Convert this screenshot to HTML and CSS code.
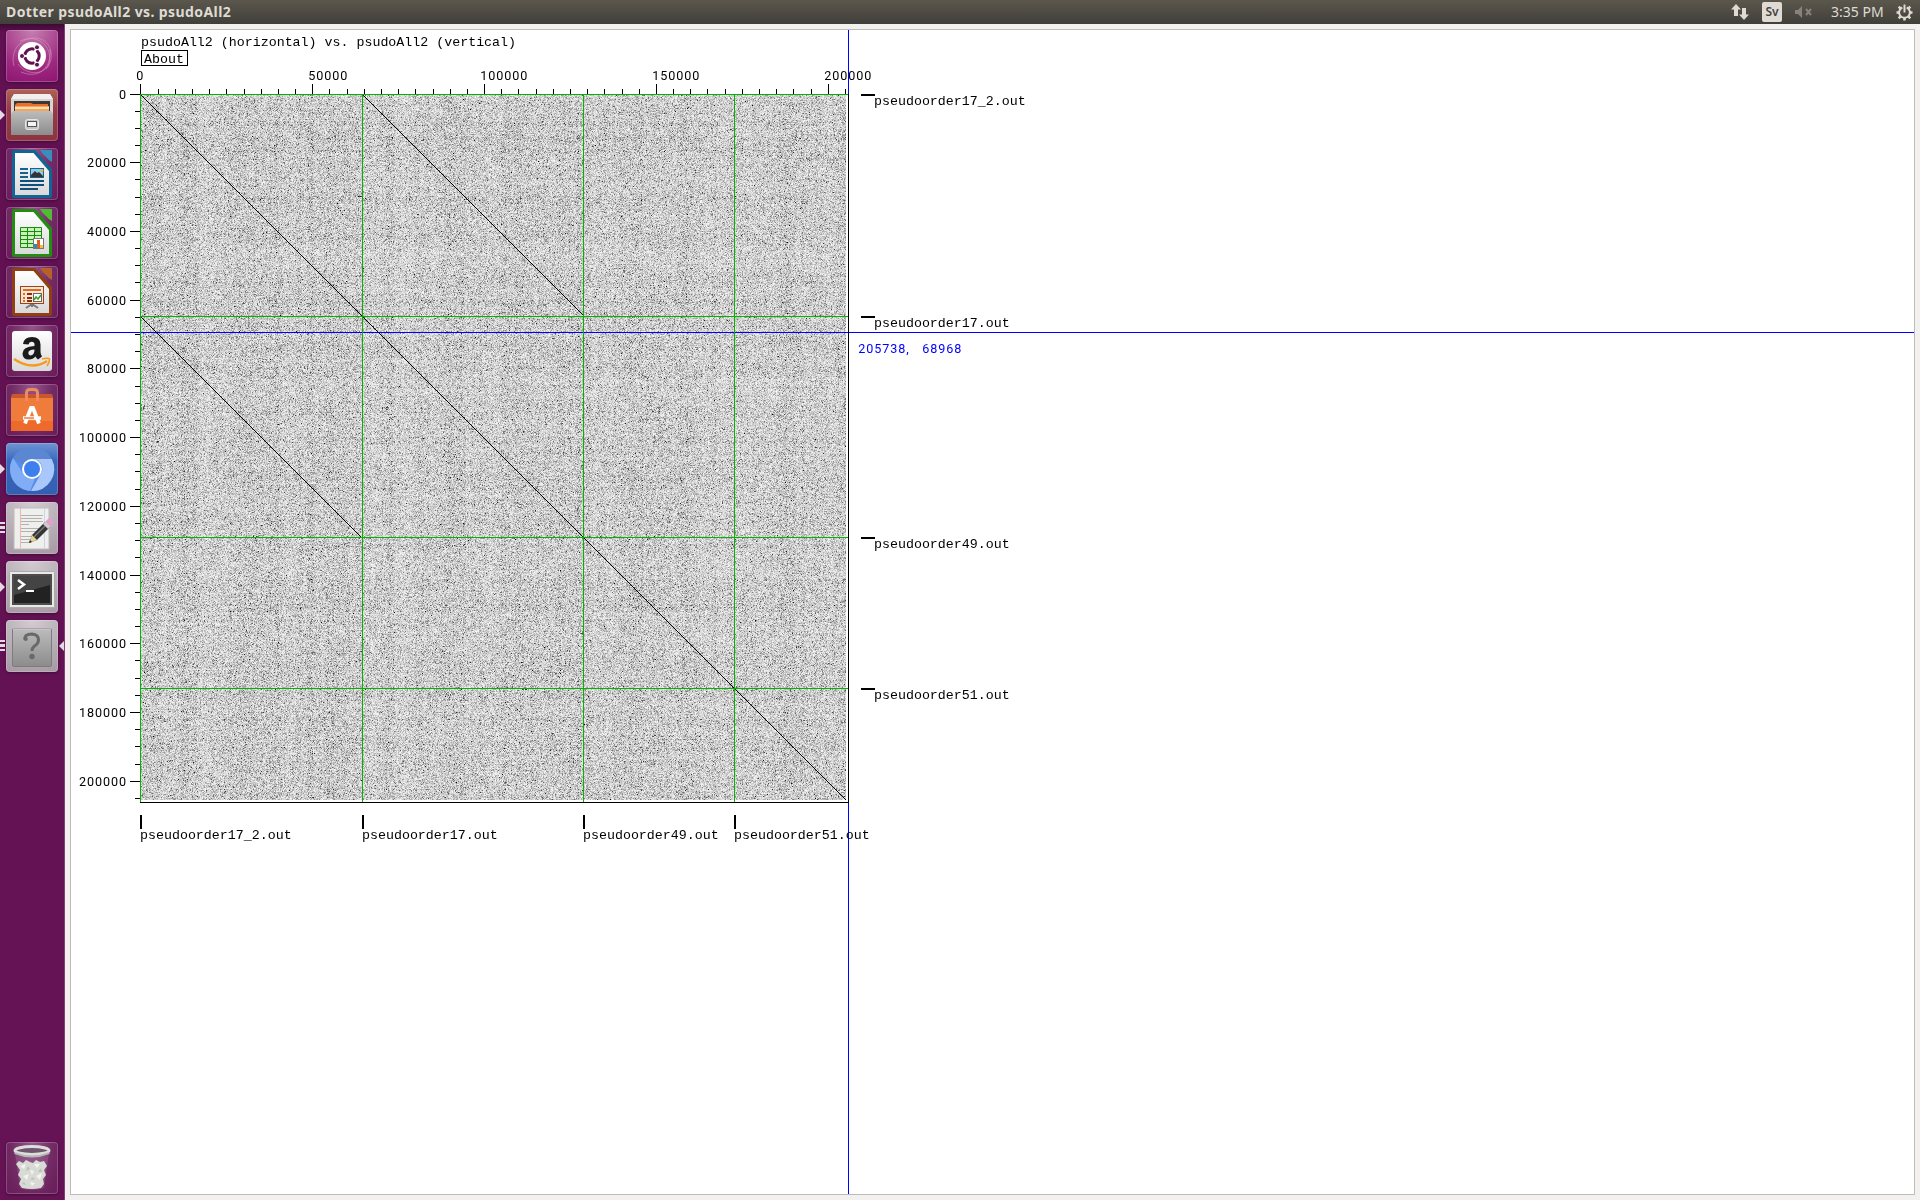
FILE: index.html
```html
<!DOCTYPE html>
<html lang="en">
<head>
<meta charset="utf-8">
<title>Dotter psudoAll2 vs. psudoAll2</title>
<link rel="stylesheet" href="styles.css">
</head>
<body>
<header class="panel">
  <h1 class="panel-title">Dotter psudoAll2 vs. psudoAll2</h1>
  <div class="indicators">
    <svg class="ind-net" width="18" height="18" viewBox="0 0 18 18"><path d="M5 1L0 6.500H3V13H7V6.500H10ZM13 17L8 11.500H11V5H15V11.500H18Z"/></svg>
    <span class="ind-lang">Sv</span>
    <svg class="ind-vol" width="18" height="12" viewBox="0 0 18 12"><path d="M0 4H3L7 0V12L3 8H0Z"/><path d="M11 3L16 9M16 3L11 9" stroke="#85837b" stroke-width="2"/></svg>
    <span class="ind-time">3:35 PM</span>
    <svg class="ind-gear" width="17" height="17" viewBox="-8.500 -8.500 17 17"><g fill="none" stroke="#dfdbd2"><path d="M-2.200 -5A5.400 5.400 0 1 0 2.200 -5" stroke-width="2"/><path d="M0 -8V0" stroke-width="2"/><path d="M5.500 0H8M-5.500 0H-8M0 5.500V8M3.900 3.900L5.800 5.800M-3.900 3.900L-5.800 5.800M3.900 -3.900L5.800 -5.800M-3.900 -3.900L-5.800 -5.800" stroke-width="2.600"/></g></svg>
  </div>
</header>
<div class="desktop">
  <nav class="launcher">
    <div class="tile dash">
      <svg viewBox="0 0 52 52"><g fill="none" stroke="#e7a9d2" stroke-opacity=".45"><path d="M8 36C3 18 20 2 37 10C48 17 47 32 40 39M14 11C34 2 49 20 42 36C34 47 18 43 12 34M44 19C46 36 34 50 15 42"/></g>
      <circle cx="26" cy="26" r="14" fill="#fff"/><circle cx="26" cy="26" r="7.200" fill="none" stroke="#5e1350" stroke-width="3"/><path d="M26 26L15 26M26 26L31.500 16.500M26 26L31.500 35.500" stroke="#fff" stroke-width="2"/><circle cx="26" cy="26" r="5" fill="#fff"/><g fill="#5e1350" stroke="#fff"><circle cx="16" cy="26" r="2.500"/><circle cx="31" cy="17.300" r="2.500"/><circle cx="31" cy="34.700" r="2.500"/></g></svg>
    </div>
    <div class="tile files">
      <svg viewBox="0 0 52 52"><path d="M8 5H44L47 10V46H5V10Z" fill="#d5d4d2"/><path d="M8 5H44L47 10H5Z" fill="#f1f0ee"/><rect x="8" y="12" width="36" height="12" fill="#3b3936"/><path d="M9 16L11 14H25L27 15H42V24H9Z" fill="#e8722b"/><path d="M9 17H43V24H9Z" fill="#f6a65a"/><path d="M9 19H43" stroke="#fff0cf" stroke-width="1.500"/><path d="M7 22H45L47 25V46H5V25Z" fill="url(#metal)"/><rect x="19.500" y="30.500" width="13" height="10" rx="2" fill="#c5c5c5" stroke="#e7e7e7"/><rect x="21.500" y="32.500" width="9" height="5" fill="#f4f4f4" stroke="#555"/></svg>
      <i class="arrow"></i>
    </div>
    <div class="tile office">
      <svg viewBox="0 0 52 52"><path d="M8 2H29L46 21V48Q46 50 44 50H8Q6 50 6 48V4Q6 2 8 2Z" fill="#126494"/><path d="M34 2H46V14Q42 12 40 9Q36 6 34 2Z" fill="#3a8dbd"/><path d="M9 5H27.500L43 23V47H9Z" fill="url(#paper)"/><path d="M14 21H22M14 25H22M14 29H22" stroke="#17618f" stroke-width="2"/><path d="M14 33H38M14 37H38M14 41H32" stroke="#0e4f7c" stroke-width="2"/><rect x="24.500" y="20.500" width="13" height="9" fill="#8ccbf0" stroke="#17618f"/><path d="M25 29V27L29 23L31 25L33 24L37 28V29Z" fill="#333"/><circle cx="36" cy="22.500" r="1.500" fill="#e6b629"/></svg>
    </div>
    <div class="tile office">
      <svg viewBox="0 0 52 52"><path d="M8 2H29L46 21V48Q46 50 44 50H8Q6 50 6 48V4Q6 2 8 2Z" fill="#218d12"/><path d="M34 2H46V14Q42 12 40 9Q36 6 34 2Z" fill="#4fbd34"/><path d="M9 5H27.500L43 23V47H9Z" fill="url(#paper)"/><path d="M14 20.500H36V40H14Z" fill="#c9f2b9"/><path d="M14.500 20.500H35.500V40.500H14.500ZM14 24.500H36M14 28.500H36M14 32.500H36M14 36.500H36M21.500 20V40M28.500 20V40" fill="none" stroke="#188b10"/><rect x="27.500" y="31.500" width="10" height="10" fill="#fff" stroke="#777"/><path d="M28 37H31V41H28Z" fill="#218dc4"/><path d="M31 33H34V41H31Z" fill="#e05d1c"/><path d="M34 38H37V41H34Z" fill="#ecc33b"/></svg>
    </div>
    <div class="tile office">
      <svg viewBox="0 0 52 52"><path d="M8 2H29L46 21V48Q46 50 44 50H8Q6 50 6 48V4Q6 2 8 2Z" fill="#8e3f13"/><path d="M34 2H46V14Q42 12 40 9Q36 6 34 2Z" fill="#b8602c"/><path d="M9 5H27.500L43 23V47H9Z" fill="url(#paper)"/><path d="M26 38V41M26 38L20 42M26 38L32 42" stroke="#777" stroke-width="2"/><rect x="14.500" y="20.500" width="23" height="17" fill="#fbe6d6" stroke="#9d4116"/><path d="M17 24H35" stroke="#e06a20" stroke-width="2"/><path d="M17 28H19M17 32H19M17 35H19" stroke="#e06a20" stroke-width="2"/><path d="M21 28H26M21 32H26M21 35H26" stroke="#8e2b0b" stroke-width="2"/><rect x="27.500" y="27.500" width="8" height="8" fill="#fff" stroke="#666"/><path d="M28 34L30 31L32 33L35 29" fill="none" stroke="#3b9c22" stroke-width="1.500"/></svg>
    </div>
    <div class="tile office">
      <svg viewBox="0 0 52 52"><rect x="6" y="6" width="40" height="40" rx="3" fill="url(#paper)"/><path d="M17 19Q18 12 26 12Q34.500 12 34.500 19.500V27Q34.500 29.500 36 31.500L32 34.500Q30.500 33.500 29.500 31.500Q27 34.500 23 34.500Q16.500 34.500 16.500 28.500Q16.500 21.500 28.500 21V19.500Q28.500 16.800 25.500 16.800Q23 16.800 22.500 19.500ZM28.500 24.500Q22.300 24.500 22.300 28Q22.300 30.400 24.500 30.400Q28.500 30 28.500 24.500Z" fill="#1b1b1b"/><path d="M8 34Q26 46 41 36" fill="none" stroke="#f79a1b" stroke-width="2.500"/><path d="M36 34Q42 32.500 43.500 34Q43.500 38 41 41" fill="none" stroke="#f79a1b" stroke-width="1.600"/></svg>
    </div>
    <div class="tile office">
      <svg viewBox="0 0 52 52"><path d="M6 10H46L47 13V47H5V13Z" fill="#c9572c"/><path d="M5 14H47V47H5Z" fill="#f07c3b"/><path d="M5 37H47V47H5Z" fill="#ee6a2b"/><path d="M20.500 17V9Q20.500 5.500 24 5.500H28Q31.500 5.500 31.500 9V17" fill="none" stroke="#ee8a62" stroke-width="3"/><g fill="none" stroke="#fff"><path d="M19 39.500L25 24H27L33 39.500" stroke-width="3.800"/><path d="M17 34H35" stroke-width="3.500"/></g><path d="M18 34H28" stroke="#ef7133" stroke-width="1.400"/></svg>
    </div>
    <div class="tile chromium">
      <svg viewBox="0 0 52 52"><circle cx="26" cy="26" r="22" fill="#568de8"/><path d="M26 4A22 22 0 0 1 45.500 16H26A10 10 0 0 0 17 21L7 15.500A22 22 0 0 1 26 4Z" fill="#5b86d1"/><path d="M7 15L17.500 31A10 10 0 0 0 29 35.500L24 48A22 22 0 0 1 7 15Z" fill="#80adf5"/><path d="M26 16H45.700A22 22 0 0 1 25 48L34.500 31.500A10 10 0 0 0 31 17Z" fill="#a9c7fb"/><circle cx="26" cy="26" r="10" fill="#fff"/><circle cx="26" cy="26" r="8" fill="#3e7fee"/></svg>
      <i class="arrow"></i>
    </div>
    <div class="tile grey">
      <svg viewBox="0 0 52 52"><rect x="8" y="6" width="35" height="41" fill="#efefed" stroke="#bbb"/><path d="M14.500 6V46" stroke="#f1b3b0"/><path d="M38.500 6V46" stroke="#c8d6ec"/><path d="M15 13.500H37M15 16.500H36M15 19.500H37M15 22.500H23M15 26.500H35M15 29.500H33M15 34.500H26M15 37.500H24M15 40.500H23" stroke="#b1b1ae"/><path d="M23 41L26 33L39 20L44 25L31 38Z" fill="#363636"/><path d="M28 35L40 23" stroke="#777" stroke-width="1.500"/><path d="M23 41L26 33L31 38Z" fill="#e5d28b"/><path d="M23 41L24 38L26 40Z" fill="#222"/><path d="M37 22L40 19L45 24L42 27Z" fill="#ccc"/><path d="M39.500 19.500L42.500 16.500Q45 16 47 19Q48 21 46.500 22.500L44.500 24.500Z" fill="#e39fca"/></svg>
      <i class="pips"></i>
    </div>
    <div class="tile grey">
      <svg viewBox="0 0 52 52"><rect x="3.500" y="10.500" width="45" height="36" rx="1" fill="#e9e9e6" stroke="#aaa"/><rect x="6" y="13" width="40" height="31" fill="#4d4d4d"/><rect x="8" y="15" width="36" height="27" fill="#222"/><path d="M8 15H44V24L8 34Z" fill="#444"/><path d="M12 19L18 23.500L12 28" fill="none" stroke="#fff" stroke-width="2.500"/><path d="M20 30H28" stroke="#fff" stroke-width="2"/></svg>
      <i class="arrow"></i>
    </div>
    <div class="tile grey">
      <svg viewBox="0 0 52 52"><rect x="6.500" y="8.500" width="39" height="38" rx="1.500" fill="url(#metal)" stroke="#7c7c7c"/><path d="M7 9H45" stroke="#d0d0d0"/><path d="M18.500 19.500Q18.500 14 26 14Q32.500 14.500 32.500 20Q32.500 23.500 28.500 26Q26 28 26 31" fill="none" stroke="#696969" stroke-width="3"/><circle cx="19.800" cy="19" r="2" fill="#696969"/><circle cx="26" cy="36.500" r="2.700" fill="#696969"/></svg>
      <i class="pips"></i><i class="arrow focused"></i>
    </div>
    <div class="tile office trash">
      <svg viewBox="0 0 52 52"><path d="M9 11L14 46Q26 50 38 46L43 11Z" fill="#a276a0" fill-opacity=".35"/><path d="M10 22L13 19L17 21L20 18L24 20L27 21L30 18L34 20L38 19L41 24L38 28L40 33L37 37L38 42L35 46Q26 48 16 46L13 42L15 37L12 33L14 28Z" fill="#d8dad5"/><path d="M14 24L20 22L18 27ZM28 22L34 22L31 26ZM17 34L23 32L21 38ZM30 34L36 31L34 38ZM24 28L28 29L26 33ZM24 40L29 41L26 44Z" fill="#f3f4f0"/><path d="M22 24L24 27L20 29ZM35 26L36 30L32 30ZM26 35L29 37L25 38ZM18 40L20 43L16 42Z" fill="#bcc0b9"/><ellipse cx="26" cy="8.500" rx="17" ry="4" fill="#705570" stroke="#dcded9" stroke-width="3"/><path d="M8.500 10V12Q26 19 43.500 12V10Q26 17 8.500 10Z" fill="#b7b9b4"/></svg>
    </div>
  </nav>
  <main class="window">
    <div class="dotplot">
      <canvas class="matches" id="matches" width="705" height="705"></canvas>
      <svg class="chart" viewBox="71 30 1843 1164" width="1843" height="1164">
        <defs>
          <linearGradient id="metal" x1="0" y1="0" x2="0" y2="1"><stop offset="0" stop-color="#bcbcbc"/><stop offset="1" stop-color="#8c8c8c"/></linearGradient>
          <linearGradient id="paper" x1="0" y1="0" x2="0" y2="1"><stop offset="0" stop-color="#fff"/><stop offset="1" stop-color="#d9d9d9"/></linearGradient>
        </defs>
        <g class="crosshair"><path d="M848.500 30V1194M71 332.500H1914"/></g>
        <g class="diagonals"><path d="M141.500 95.500L846 800M363.500 95.500L584 316M141.500 317.500L362 538"/></g>
        <path class="frame" d="M848.500 94V803M140 802.500H849"/>
        <path class="breaks" d="M140.500 94V802M362.500 94V802M583.500 94V802M734.500 94V802M140 94.500H848M140 316.500H848M140 537.500H848M140 688.500H848"/>
        <g id="ticks" class="ticks"></g>
        <rect class="about-box" x="141.500" y="50.500" width="46" height="15"/>
        <g class="names">
          <text x="141" y="46">psudoAll2 (horizontal) vs. psudoAll2 (vertical)</text>
          <text x="144" y="63">About</text>
          <text x="874" y="105">pseudoorder17_2.out</text>
          <text x="874" y="327">pseudoorder17.out</text>
          <text x="874" y="548">pseudoorder49.out</text>
          <text x="874" y="699">pseudoorder51.out</text>
          <text x="140" y="839">pseudoorder17_2.out</text>
          <text x="362" y="839">pseudoorder17.out</text>
          <text x="583" y="839">pseudoorder49.out</text>
          <text x="734" y="839">pseudoorder51.out</text>
        </g>
        <path class="marks" d="M861 95H875M861 317H875M861 538H875M861 689H875M141 815V829M363 815V829M584 815V829M735 815V829"/>
        <text class="num cursor" y="353"><tspan x="858.300">205738,</tspan> <tspan x="922.300">68968</tspan></text>
        <g id="labels"></g>
      </svg>
    </div>
  </main>
</div>
<script src="plot.js"></script>
</body>
</html>
```
FILE: styles.css
```css
* { box-sizing: border-box; }
body {
  margin: 0;
  width: 1920px;
  height: 1200px;
  overflow: hidden;
  display: flex;
  flex-direction: column;
  background: #f2f1f0;
}
.panel {
  height: 24px;
  flex: none;
  display: flex;
  align-items: center;
  justify-content: space-between;
  padding: 0 7px 0 6px;
  background: linear-gradient(#5b574d, #403f3a);
  color: #dfdbd2;
  font-family: "Noto Sans", sans-serif;
}
.panel-title {
  margin: 0;
  font-size: 14px;
  line-height: 24px;
  font-weight: 700;
  letter-spacing: .41px;
  white-space: nowrap;
}
.indicators { display: flex; align-items: center; height: 24px; }
.indicators svg { fill: #dfdbd2; flex: none; }
.indicators .ind-vol { fill: #85837b; margin-right: 18px; }
.ind-net { margin-right: 13px; }
.ind-lang {
  width: 20px;
  height: 20px;
  margin-right: 13px;
  border-radius: 2px;
  background: #dfdbd2;
  color: #45433d;
  font: 600 12px/20px "Noto Sans", sans-serif;
  text-align: center;
}
.ind-time { width: 53px; margin-right: 12px; font-size: 14px; line-height: 24px; white-space: nowrap; }
.desktop { flex: 1; display: flex; min-height: 0; }
.launcher {
  width: 65px;
  flex: none;
  display: flex;
  flex-direction: column;
  gap: 7px;
  padding: 6px 0 6px 6px;
  border-right: 1px solid #834079;
  background: linear-gradient(#3d0a34, #611052 8px, #651355);
}
.tile {
  position: relative;
  width: 52px;
  height: 52px;
  flex: none;
  border-radius: 4px;
  box-shadow: inset 0 0 0 1px rgba(255,255,255,.2), 0 1px 3px rgba(0,0,0,.35);
}
.tile svg { display: block; width: 52px; height: 52px; }
.dash { background: radial-gradient(circle at 50% 0, #c680b0, #9e2a80 65%, #8c1470); }
.files { background: linear-gradient(#ad6455, #96394a 40%, #8e3440); }
.office { background: radial-gradient(ellipse at 50% 0, #94578a, #732b65 55%, #681b59); }
.chromium { background: linear-gradient(#6e94d2, #3967bd 35%, #345fb1); }
.grey { background: radial-gradient(circle at 50% 0, #d4ccd2, #b3a9b1 65%, #a798a4); }
.trash { margin-top: auto; }
.arrow {
  position: absolute;
  left: -6px;
  top: 21px;
  border: solid transparent;
  border-width: 5px 0 5px 5px;
  border-left-color: #e3dbe1;
}
.arrow.focused { left: 53px; border-width: 5px 5px 5px 0; border-right-color: #e3dbe1; }
.pips {
  position: absolute;
  left: -6px;
  top: 20px;
  width: 5px;
  height: 11px;
  background: linear-gradient(#e3dbe1 2px, transparent 2px 4px, #e3dbe1 4px 7px, transparent 7px 9px, #e3dbe1 9px);
}
.window { flex: 1; padding: 5px; }
.dotplot {
  position: relative;
  width: 1845px;
  height: 1166px;
  border: 1px solid #bfbcb8;
  background: #fff;
}
.matches { position: absolute; left: 70px; top: 65px; }
.chart { position: relative; display: block; }
.chart path { fill: none; shape-rendering: crispEdges; }
.crosshair { stroke: #00f; }
.diagonals, .frame, .ticks { stroke: #000; }
.breaks { stroke: #00b400; }
.marks { stroke: #000; stroke-width: 2; }
.about-box { fill: none; stroke: #000; shape-rendering: crispEdges; }
.names { font: 13.3px "Liberation Mono", monospace; }
.num { font: 12.6px Roboto, sans-serif; letter-spacing: .92px; fill: #000; }
.num.cursor { fill: #00f; }
```
FILE: plot.js
```js
// Pixels per base, and the top left corner of the plot
const SCALE = 0.003436, X0 = 140, Y0 = 94;
let marks = '', labels = '';
for (let base = 0; base <= 205000; base += 5000) {
  const x = Math.ceil(X0 + base * SCALE) + 0.5;
  const y = Math.floor(Y0 + base * SCALE) + 0.5;
  const majorX = base % 50000 === 0, majorY = base % 20000 === 0;
  marks += `M${x} ${majorX ? 84 : 89}V94`;
  marks += `M${majorY ? 130 : 135} ${y}H140`;
  if (majorX) labels += `<text class="num" x="${x - 4.3}" y="80">${base}</text>`;
  if (majorY) labels += `<text class="num" x="${127 - 8 * String(base).length}" y="${y + 4.5}">${base}</text>`;
}
document.getElementById('ticks').innerHTML = `<path d="${marks}"/>`;
document.getElementById('labels').innerHTML = labels;

// Background matches: seeded noise with faint row and column bands
let seed = 20517;
function rnd() {
  seed = (seed + 0x6D2B79F5) | 0;
  let t = Math.imul(seed ^ (seed >>> 15), 1 | seed);
  t = (t + Math.imul(t ^ (t >>> 7), 61 | t)) ^ t;
  return ((t ^ (t >>> 14)) >>> 0) / 4294967296;
}
const N = 705;
function bands() {
  const out = [];
  let drift = 0;
  for (let i = 0; i < N; i++) {
    drift = drift * 0.8 + (rnd() - 0.5) * 0.1;
    out.push(1 + drift + (rnd() - 0.5) * 0.16);
  }
  return out;
}
const rows = bands(), cols = bands();
const ctx = document.getElementById('matches').getContext('2d');
const img = ctx.createImageData(N, N);
for (let y = 0; y < N; y++) {
  for (let x = 0; x < N; x++) {
    const d = -18.5 * Math.log((rnd() + 1e-6) * (rnd() + 1e-6) * (rnd() + 1e-6)) * rows[y] * cols[x];
    const v = Math.max(0, 255 - d);
    const i = (y * N + x) * 4;
    img.data[i] = img.data[i + 1] = img.data[i + 2] = v;
    img.data[i + 3] = 255;
  }
}
ctx.putImageData(img, 0, 0);
```
